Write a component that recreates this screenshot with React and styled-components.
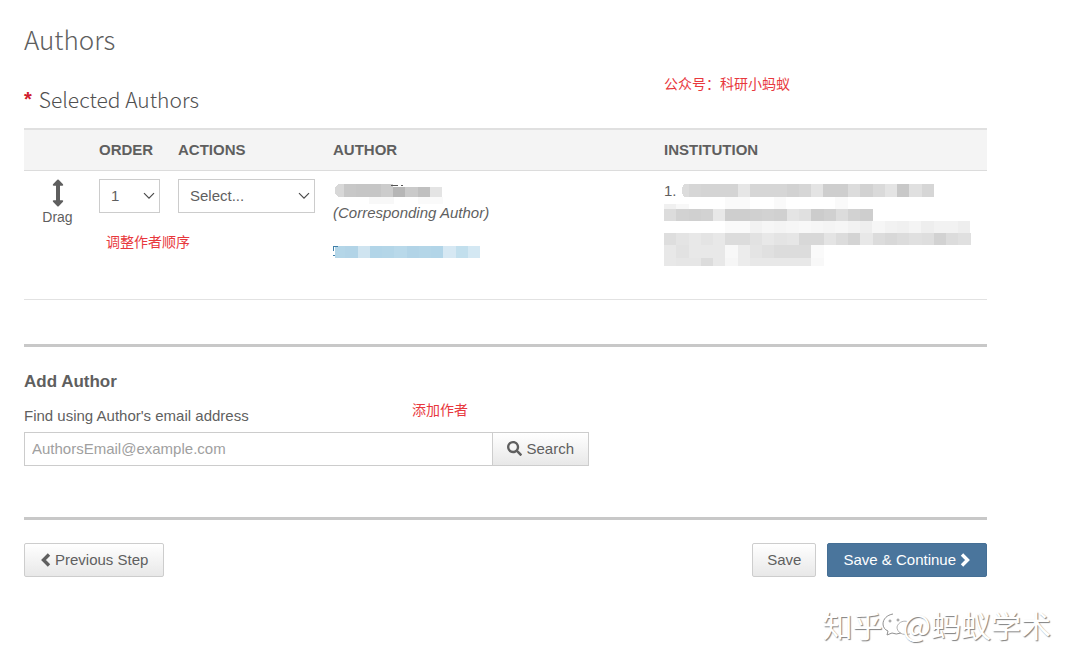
import React, { useState } from 'react'
import styled, { createGlobalStyle, css } from 'styled-components'
import { FaSearch } from 'react-icons/fa'

const GlobalStyle = createGlobalStyle`
    * {
        box-sizing: border-box;
    }

    body {
        margin: 0;
        background: #ffffff;
        color: #5f5f5f;
        font: 15px/24px "Liberation Sans", Arial, "Noto Sans CJK SC", sans-serif;
    }
`

const Page = styled.main`
    position: relative;
    padding: 23px 93px 24px 24px;
`

const Title = styled.h1`
    margin: 0 0 28px;
    font: 300 26px/32px "Noto Sans CJK SC", sans-serif;
`

const SectionTitle = styled.h2`
    display: flex;
    gap: 7px;
    margin: 0 0 13px;
    color: #505050;
    font: 300 21px/32px "Noto Sans CJK SC", sans-serif;
`

const Required = styled.span`
    color: #d0202e;
    font: bold 20px/32px "Liberation Sans", Arial, sans-serif;
`

const Note = styled.span`
    color: #e8383d;
    font: 14px/20px "Noto Sans CJK SC", sans-serif;
    white-space: nowrap;
`

const AccountNote = styled(Note)`
    position: absolute;
    top: 73px;
    left: 664px;
`

const AddNote = styled(Note)`
    position: absolute;
    top: 29px;
    left: 388px;
`

const OrderNote = styled(Note)`
    display: block;
    margin: 18px 0 0 7px;
`

const AuthorTable = styled.table`
    width: 100%;
    table-layout: fixed;
    border-collapse: collapse;

    th {
        height: 41px;
        padding: 0 8px;
        border-top: 2px solid #e0e0e0;
        border-bottom: 1px solid #dcdcdc;
        background: #f4f4f4;
        text-align: left;
        text-transform: uppercase;
    }

    td {
        height: 129px;
        padding: 8px;
        border-bottom: 1px solid #e2e2e2;
        vertical-align: top;
    }
`

const Col = styled.col`
    width: ${props => props.$width};
`

const DragHandle = styled.div`
    display: flex;
    flex-direction: column;
    align-items: center;
    font-size: 14px;
    line-height: 20px;
`

const SelectBox = styled.span`
    display: flex;
    position: relative;
    margin-right: 2px;

    > select {
        width: 100%;
        height: 34px;
        padding: 0 11px;
        appearance: none;
        border: 1px solid #cccccc;
        border-radius: 0;
        background: #ffffff;
        color: inherit;
        font: inherit;
    }

    > svg {
        position: absolute;
        top: 13px;
        right: 5px;
        pointer-events: none;
    }
`

const AuthorInfo = styled.div`
    display: flex;
    flex-direction: column;

    > em {
        margin-bottom: 21px;
    }
`

const MosaicSvg = styled.svg`
    display: block;
    max-width: none;
    overflow: visible;
`

const Institution = styled.div`
    display: grid;

    > * {
        grid-area: 1 / 1;
    }
`

const Rule = styled.hr`
    height: 3px;
    margin: ${props => props.$top} 0 23px;
    border: 0;
    background: #c8c8c8;
`

const AddForm = styled.form`
    position: relative;

    > h3 {
        margin: 0 0 10px;
        font-size: 17px;
        line-height: 24px;
    }

    > label {
        display: block;
        margin-bottom: 4px;
    }
`

const SearchRow = styled.div`
    display: flex;
    width: 565px;
    max-width: 100%;
`

const EmailInput = styled.input`
    flex: 1;
    min-width: 0;
    height: 34px;
    padding: 0 7px;
    border: 1px solid #cccccc;
    border-right: 0;
    border-radius: 0;
    color: inherit;
    font: inherit;

    &::placeholder {
        color: #a0a0a0;
        opacity: 1;
    }
`

const Button = styled.button`
    display: inline-flex;
    align-items: center;
    gap: 4px;
    height: 34px;
    padding: 0 ${props => (props.$wide ? '15px' : '14px')};
    border: 1px solid #cdcdcd;
    border-radius: 2px;
    background: linear-gradient(#ffffff, #e8e8e8);
    color: inherit;
    font: inherit;
    white-space: nowrap;

    ${props => props.$attached && css`
        border-radius: 0;
    `}

    ${props => props.$primary && css`
        border-color: #456f95;
        background: #4a759c;
        color: #ffffff;
    `}
`

const Actions = styled.div`
    display: flex;
    gap: 11px;

    > :first-child {
        margin-right: auto;
    }
`

const Watermark = styled.div`
    display: flex;
    justify-content: flex-end;
    align-items: center;
    margin: 27px -64px 0 0;
    color: #ffffff;
    font: 30px/40px "Noto Sans CJK SC", sans-serif;
    text-shadow: 1px 1px 1px #808080;
    white-space: nowrap;

    > svg {
        margin: 0 -8px 0 -2px;
    }
`

const SelectArrow = () => (
    <svg width='12' height='8' viewBox='0 0 12 8' fill='none' stroke='#4a4a4a' strokeWidth='1.2' aria-hidden='true'>
        <path d='M1 1.2L6 6.2L11 1.2'/>
    </svg>
)

const DragArrow = () => (
    <svg width='12' height='28' viewBox='0 0 12 28' fill='currentColor' aria-hidden='true'>
        <path d='M5.3 0.8Q6 0.2 6.7 0.8L11 5.2Q11.8 6.6 10.4 6.8H8V21.2H10.4Q11.8 21.4 11 22.8L6.7 27.2Q6 27.8 5.3 27.2L1 22.8Q0.2 21.4 1.6 21.2H4V6.8H1.6Q0.2 6.6 1 5.2Z'/>
    </svg>
)

const Chevron = ({ d }) => (
    <svg width='11' height='14' viewBox='0 0 11 14' fill='none' stroke='currentColor' strokeWidth='3.4' aria-hidden='true'>
        <path d={d}/>
    </svg>
)

const WeChatMark = () => (
    <svg width='30' height='30' viewBox='0 0 30 30' fill='none' stroke='#909090' strokeWidth='1' aria-hidden='true'>
        <path d='M12 5C6 6 2 10 2 15C2 18 4 21 7 22L6 26L11 24Q15 26 20 24'/>
        <path d='M29 14C24 10 17 13 16 18C16 23 21 27 29 25' stroke='#b4b4b4'/>
        <circle cx='9' cy='12' r='1'/>
        <circle cx='17' cy='11' r='1'/>
    </svg>
)

const CELL = 12.27

// rows: [x, y, height, shades], one shade for each cell, null leaves a hole
const Mosaic = ({ width, height, rows, children }) => (
    <MosaicSvg width={width} height={height} shapeRendering='crispEdges' aria-hidden='true'>
        {rows.map(([x, y, h, shades], row) => shades.map((shade, i) => shade && (
            <rect key={`${row}-${i}`} x={x + i * CELL} y={y} width={CELL} height={h} fill={shade}/>
        )))}
        {children}
    </MosaicSvg>
)

const gray = text => text.split(' ').map(v => (v === '-' ? null : `#${v}${v}${v}`))

const nameRows = [
    [11, 5, 13, gray('c8 c6 c6 cc')],
    [60, 8, 10, gray('b6 ca c0 e4')],
    [36, 18, 7, gray('f8 f8 - - fa fa')],
]

const emailRows = [
    [0, 0, 12, ['#b4d6e8', '#b2d4e7', '#cfe4f0', '#b2d5e8', '#b4d6e8', '#b9d9ea', '#b2d4e7', '#b4d6e8', '#b2d5e8', '#d6e8f3', '#c2dfed', '#d4e8f3']],
]

const institutionRows = [
    [24.5, 5, 13, gray('d6 d4 d4 d4 e6 d6 d6 d6 d2 d6 e4 ce ce dc d2 da e4 c8 e0 d6')],
    [61, 18, 12, gray('fa fa - - fa - - - - fa')],
    [0, 25, 5, gray('f0 f8')],
    [0, 30, 12, gray('dc d2 d0 d2 e8 ce ce d0 d2 d0 e4 e0 cc d0 dc d2 ce')],
    [61, 42, 12, gray('fa fa f2 f6 f4 f6 f8 f6 f4 f6 f2 ee f6 f2 f0 f4 ee f2 f2 ee')],
    [0, 54, 12, gray('de e4 e8 e4 e8 dc dc e2 e8 e4 e6 d8 d8 e4 dc d4 e8 dc d8 dc e0 de d2 dc e0')],
    [0, 66, 13, gray('e8 e2 e8 e8 e8 f8 ec e4 e0 dc dc dc fa')],
    [0, 79, 8, gray('e8 e6 e6 dc e8 f6 ec e8 e8 e8 e8 e8 f8')],
]

const App = () => {
    const [email, setEmail] = useState('')

    return (<>
        <GlobalStyle/>
        <Page>
            <Title>Authors</Title>
            <SectionTitle><Required>*</Required>Selected Authors</SectionTitle>
            <AccountNote>公众号：科研小蚂蚁</AccountNote>
            <AuthorTable>
                <colgroup>
                    <Col $width='67px'/>
                    <Col $width='79px'/>
                    <Col $width='155px'/>
                    <Col/>
                    <Col/>
                </colgroup>
                <thead>
                    <tr>
                        <th aria-label='Drag'/>
                        <th>Order</th>
                        <th>Actions</th>
                        <th>Author</th>
                        <th>Institution</th>
                    </tr>
                </thead>
                <tbody>
                    <tr>
                        <td>
                            <DragHandle>
                                <DragArrow/>
                                Drag
                            </DragHandle>
                        </td>
                        <td>
                            <SelectBox>
                                <select aria-label='Order' defaultValue='1'>
                                    <option>1</option>
                                </select>
                                <SelectArrow/>
                            </SelectBox>
                            <OrderNote>调整作者顺序</OrderNote>
                        </td>
                        <td>
                            <SelectBox>
                                <select aria-label='Actions'>
                                    <option>Select...</option>
                                </select>
                                <SelectArrow/>
                            </SelectBox>
                        </td>
                        <td>
                            <AuthorInfo>
                                <Mosaic width={160} height={22} rows={nameRows}>
                                    <path d='M11 5H6Q2 6 2 11.5Q2 17 6 18H11Z' fill='#d8d8d8'/>
                                    <path d='M58 6.5H65M68 6.5H70' stroke='#555555'/>
                                </Mosaic>
                                <em>(Corresponding Author)</em>
                                <Mosaic width={147} height={12} rows={emailRows}>
                                    <path d='M0 1H2V12H0Z' fill='#ffffff'/>
                                    <path d='M5 0.5H0.5V5M0 9.5H2' stroke='#3f7fa8' fill='none'/>
                                </Mosaic>
                            </AuthorInfo>
                        </td>
                        <td>
                            <Institution>
                                <span>1.</span>
                                <Mosaic width={310} height={90} rows={institutionRows}>
                                    <path d='M25 5H21Q18 6 18 11.5Q18 17 21 18H25Z' fill='#dcdcdc'/>
                                </Mosaic>
                            </Institution>
                        </td>
                    </tr>
                </tbody>
            </AuthorTable>
            <Rule $top='44px'/>
            <AddForm onSubmit={e => e.preventDefault()}>
                <h3>Add Author</h3>
                <label htmlFor='author-email'>Find using Author's email address</label>
                <SearchRow>
                    <EmailInput
                        id='author-email'
                        placeholder='AuthorsEmail@example.com'
                        value={email}
                        onChange={e => setEmail(e.target.value)}
                    />
                    <Button $attached><FaSearch/>Search</Button>
                </SearchRow>
                <AddNote>添加作者</AddNote>
            </AddForm>
            <Rule $top='51px'/>
            <Actions>
                <Button type='button' $wide><Chevron d='M9 1.5L3.5 7L9 12.5'/>Previous Step</Button>
                <Button type='button'>Save</Button>
                <Button type='button' $wide $primary>Save &amp; Continue<Chevron d='M2 1.5L7.5 7L2 12.5'/></Button>
            </Actions>
            <Watermark>知乎<WeChatMark/>@蚂蚁学术</Watermark>
        </Page>
    </>)
}

export default App
